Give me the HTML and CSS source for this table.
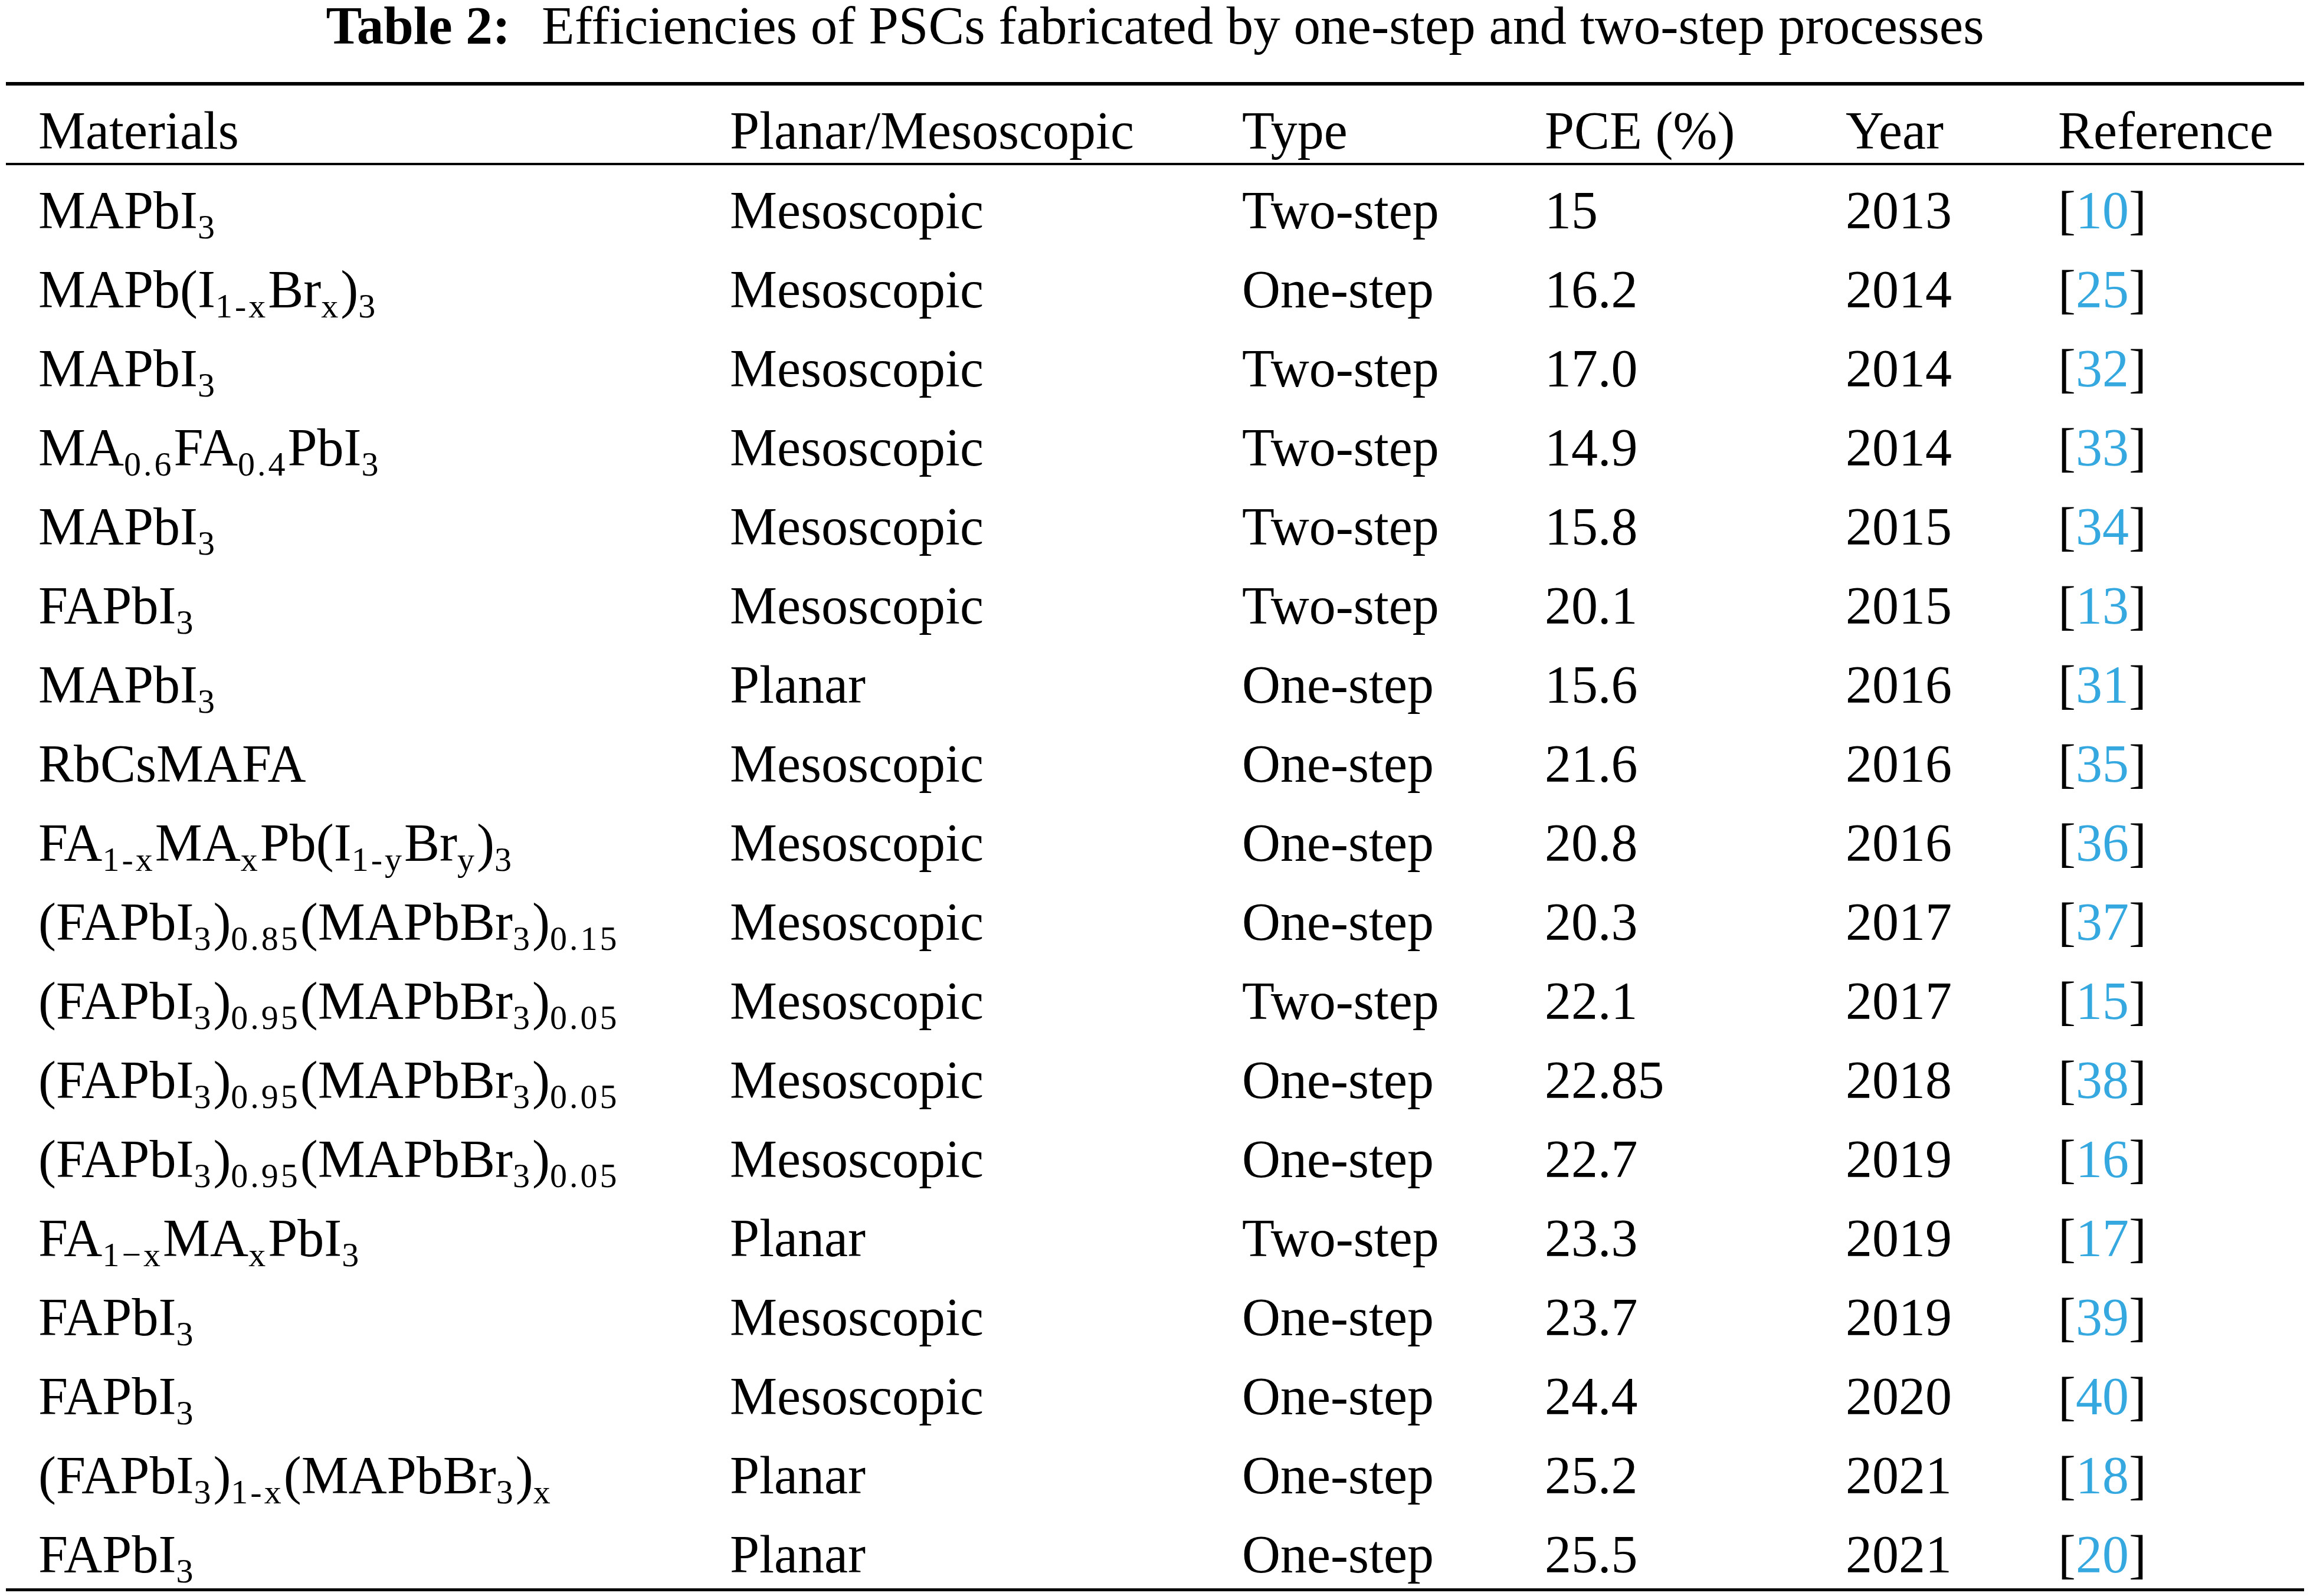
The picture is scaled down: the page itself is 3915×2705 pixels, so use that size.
FILE: index.html
```html
<!DOCTYPE html>
<html lang="en">
<head>
<meta charset="utf-8">
<title>Table 2</title>
<link rel="stylesheet" href="styles.css">
</head>
<body>
<div class="caption"><span class="label">Table 2:</span>Efficiencies of PSCs fabricated by one-step and two-step processes</div>
<table class="data">
<colgroup>
<col class="c1"><col class="c2"><col class="c3"><col class="c4"><col class="c5"><col class="c6">
</colgroup>
<thead>
<tr><th class="first">Materials</th><th>Planar/Mesoscopic</th><th>Type</th><th>PCE (%)</th><th>Year</th><th>Reference</th></tr>
</thead>
<tbody>
<tr><td class="first">MAPbI<sub>3</sub></td><td>Mesoscopic</td><td>Two-step</td><td>15</td><td>2013</td><td>[<span class="ref">10</span>]</td></tr>
<tr><td class="first">MAPb(I<sub>1-x</sub>Br<sub>x</sub>)<sub>3</sub></td><td>Mesoscopic</td><td>One-step</td><td>16.2</td><td>2014</td><td>[<span class="ref">25</span>]</td></tr>
<tr><td class="first">MAPbI<sub>3</sub></td><td>Mesoscopic</td><td>Two-step</td><td>17.0</td><td>2014</td><td>[<span class="ref">32</span>]</td></tr>
<tr><td class="first">MA<sub>0.6</sub>FA<sub>0.4</sub>PbI<sub>3</sub></td><td>Mesoscopic</td><td>Two-step</td><td>14.9</td><td>2014</td><td>[<span class="ref">33</span>]</td></tr>
<tr><td class="first">MAPbI<sub>3</sub></td><td>Mesoscopic</td><td>Two-step</td><td>15.8</td><td>2015</td><td>[<span class="ref">34</span>]</td></tr>
<tr><td class="first">FAPbI<sub>3</sub></td><td>Mesoscopic</td><td>Two-step</td><td>20.1</td><td>2015</td><td>[<span class="ref">13</span>]</td></tr>
<tr><td class="first">MAPbI<sub>3</sub></td><td>Planar</td><td>One-step</td><td>15.6</td><td>2016</td><td>[<span class="ref">31</span>]</td></tr>
<tr><td class="first">RbCsMAFA</td><td>Mesoscopic</td><td>One-step</td><td>21.6</td><td>2016</td><td>[<span class="ref">35</span>]</td></tr>
<tr><td class="first">FA<sub>1-x</sub>MA<sub>x</sub>Pb(I<sub>1-y</sub>Br<sub>y</sub>)<sub>3</sub></td><td>Mesoscopic</td><td>One-step</td><td>20.8</td><td>2016</td><td>[<span class="ref">36</span>]</td></tr>
<tr><td class="first">(FAPbI<sub>3</sub>)<sub>0.85</sub>(MAPbBr<sub>3</sub>)<sub>0.15</sub></td><td>Mesoscopic</td><td>One-step</td><td>20.3</td><td>2017</td><td>[<span class="ref">37</span>]</td></tr>
<tr><td class="first">(FAPbI<sub>3</sub>)<sub>0.95</sub>(MAPbBr<sub>3</sub>)<sub>0.05</sub></td><td>Mesoscopic</td><td>Two-step</td><td>22.1</td><td>2017</td><td>[<span class="ref">15</span>]</td></tr>
<tr><td class="first">(FAPbI<sub>3</sub>)<sub>0.95</sub>(MAPbBr<sub>3</sub>)<sub>0.05</sub></td><td>Mesoscopic</td><td>One-step</td><td>22.85</td><td>2018</td><td>[<span class="ref">38</span>]</td></tr>
<tr><td class="first">(FAPbI<sub>3</sub>)<sub>0.95</sub>(MAPbBr<sub>3</sub>)<sub>0.05</sub></td><td>Mesoscopic</td><td>One-step</td><td>22.7</td><td>2019</td><td>[<span class="ref">16</span>]</td></tr>
<tr><td class="first">FA<sub>1&minus;x</sub>MA<sub>x</sub>PbI<sub>3</sub></td><td>Planar</td><td>Two-step</td><td>23.3</td><td>2019</td><td>[<span class="ref">17</span>]</td></tr>
<tr><td class="first">FAPbI<sub>3</sub></td><td>Mesoscopic</td><td>One-step</td><td>23.7</td><td>2019</td><td>[<span class="ref">39</span>]</td></tr>
<tr><td class="first">FAPbI<sub>3</sub></td><td>Mesoscopic</td><td>One-step</td><td>24.4</td><td>2020</td><td>[<span class="ref">40</span>]</td></tr>
<tr><td class="first">(FAPbI<sub>3</sub>)<sub>1-x</sub>(MAPbBr<sub>3</sub>)<sub>x</sub></td><td>Planar</td><td>One-step</td><td>25.2</td><td>2021</td><td>[<span class="ref">18</span>]</td></tr>
<tr class="last"><td class="first">FAPbI<sub>3</sub></td><td>Planar</td><td>One-step</td><td>25.5</td><td>2021</td><td>[<span class="ref">20</span>]</td></tr>
</tbody>
</table>
</body>
</html>
```
FILE: styles.css
```css
html, body {
  margin: 0;
  padding: 0;
  background: #ffffff;
}

body {
  width: 3915px;
  font-family: "Liberation Serif", "Times New Roman", serif;
  font-size: 90px;
  color: #000000;
}

.caption {
  text-align: center;
  font-size: 91px;
  line-height: 88px;
  height: 88px;
  margin: 0 0 51px 0;
  white-space: nowrap;
}

.caption .label {
  font-weight: bold;
  margin-right: 53px;
}

.data {
  margin-left: 10px;
  width: 3895px;
  table-layout: fixed;
  border-collapse: separate;
  border-spacing: 0;
}

.c1 { width: 1227px; }
.c2 { width: 868px; }
.c3 { width: 513px; }
.c4 { width: 510px; }
.c5 { width: 360px; }
.c6 { width: 417px; }

.data th,
.data td {
  font-weight: normal;
  text-align: left;
  vertical-align: top;
  white-space: nowrap;
  line-height: 100px;
  height: 100px;
  padding: 26.5px 0 7.5px 0;
}

.data th {
  border-top: 6px solid #000000;
  border-bottom: 4px solid #000000;
  padding-bottom: 4.5px;
}

.data .first {
  padding-left: 55px;
}

.data .last td {
  border-bottom: 5px solid #000000;
}

.data sub {
  font-size: 58px;
  letter-spacing: 4px;
  line-height: 0;
  vertical-align: -17px;
}

.ref {
  color: #35a8e0;
}
```
